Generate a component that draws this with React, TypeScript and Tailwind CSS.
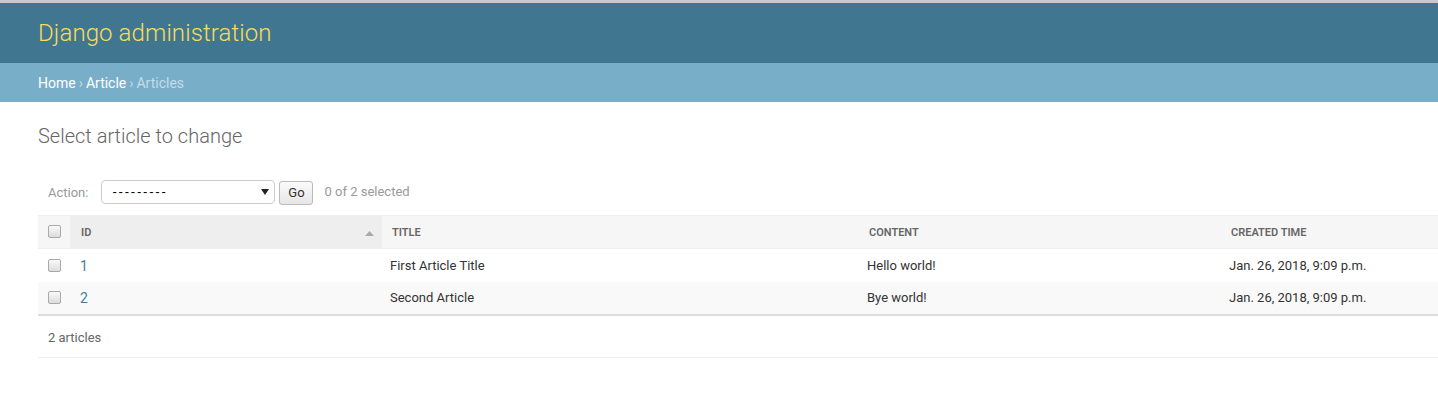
import React from "react";

const Check = () => (
  <span className="inline-block w-[13px] h-[13px] rounded-[2px] border border-[#a9a9a9] bg-gradient-to-b from-[#fafafa] to-[#dcdcdc] align-middle" />
);

export default function App() {
  const rows = [
    { id: "1", title: "First Article Title", content: "Hello world!", time: "Jan. 26, 2018, 9:09 p.m.", bg: "bg-white" },
    { id: "2", title: "Second Article", content: "Bye world!", time: "Jan. 26, 2018, 9:09 p.m.", bg: "bg-[#f9f9f9]" },
  ];
  return (
    <div className="w-[1438px] min-h-[414px] bg-white text-[#333] border-t-[3px] border-[#c8c8c8]" style={{ fontFamily: "Roboto, 'Liberation Sans', sans-serif" }}>
      <div className="h-[60px] bg-[#417690] flex items-center px-[38px]">
        <span className="text-[24px] font-light text-[#f5dd5d] leading-none tracking-[0.1px]">Django administration</span>
      </div>
      <div className="h-[39px] bg-[#79aec8] flex items-center px-[38px] pt-[2px] text-[14px] text-[#c4dce8]">
        <span className="text-white">Home</span>
        <span className="mx-[3px]">›</span>
        <span className="text-white">Article</span>
        <span className="mx-[3px]">›</span>
        <span>Articles</span>
      </div>
      <div className="pl-[38px] pt-[22px]">
        <h1 className="text-[20px] leading-[24px] font-light text-[#666]">Select article to change</h1>
        <div className="mt-[22px] h-[45px] flex items-center pl-[10px] text-[13px] text-[#999]">
          <span>Action:</span>
          <div className="ml-[13px] mb-[2px] w-[174px] h-[24px] border border-[#ccc] rounded-[4px] bg-white flex items-center justify-between pl-[10px] pr-[5px] text-black text-[13px]">
            <span className="tracking-[1.8px]" style={{ fontFamily: "'Liberation Sans', sans-serif" }}>---------</span>
            <svg width="8" height="6" viewBox="0 0 8 6"><path d="M0 0 L8 0 L4 6 Z" fill="#222" /></svg>
          </div>
          <div className="ml-[4px] w-[34px] h-[24px] border border-[#bbb] rounded-[3px] bg-gradient-to-b from-[#fbfbfb] to-[#e6e6e6] flex items-center justify-center text-[13px] text-[#333]">Go</div>
          <span className="ml-[11px] mb-[2px]">0 of 2 selected</span>
        </div>
        <table className="w-[1400px] table-fixed border-collapse border-t border-[#eee]">
          <colgroup>
            <col className="w-[32px]" />
            <col className="w-[312px]" />
            <col className="w-[476px]" />
            <col className="w-[362px]" />
            <col />
          </colgroup>
          <thead>
            <tr className="h-[33px] bg-[#f6f6f6] text-[11px] font-semibold uppercase text-[#666] text-left">
              <th className="pl-[10px]"><Check /></th>
              <th className="bg-[#eee] pl-[11px] pr-[8px] pt-[2px] font-semibold">
                <div className="flex items-center justify-between">
                  <span>ID</span>
                  <svg width="9" height="5" viewBox="0 0 9 5"><path d="M0 5 L4.5 0 L9 5 Z" fill="#aaa" /></svg>
                </div>
              </th>
              <th className="pl-[10px] pt-[2px] font-semibold">Title</th>
              <th className="pl-[11px] pt-[2px] font-semibold">Content</th>
              <th className="pl-[11px] pt-[2px] font-semibold">Created time</th>
            </tr>
          </thead>
          <tbody className="text-[13px]">
            {rows.map((r, i) => (
              <tr key={r.id} className={`h-[33px] ${r.bg} ${i === rows.length - 1 ? "border-b-2 border-[#ddd]" : "border-t border-[#eee]"}`}>
                <td className="pl-[10px] pb-[2px]"><Check /></td>
                <td className="pl-[10px] pt-[2px] text-[#447e9b] text-[14px]">{r.id}</td>
                <td className="pl-[8px] pt-[1px]">{r.title}</td>
                <td className="pl-[9px] pt-[1px]">{r.content}</td>
                <td className="pl-[9px] pt-[1px]">{r.time}</td>
              </tr>
            ))}
          </tbody>
        </table>
        <div className="w-[1400px] h-[42px] flex items-center pl-[10px] pt-[3px] text-[13px] text-[#666] border-b border-[#eee]">2 articles</div>
      </div>
    </div>
  );
}
